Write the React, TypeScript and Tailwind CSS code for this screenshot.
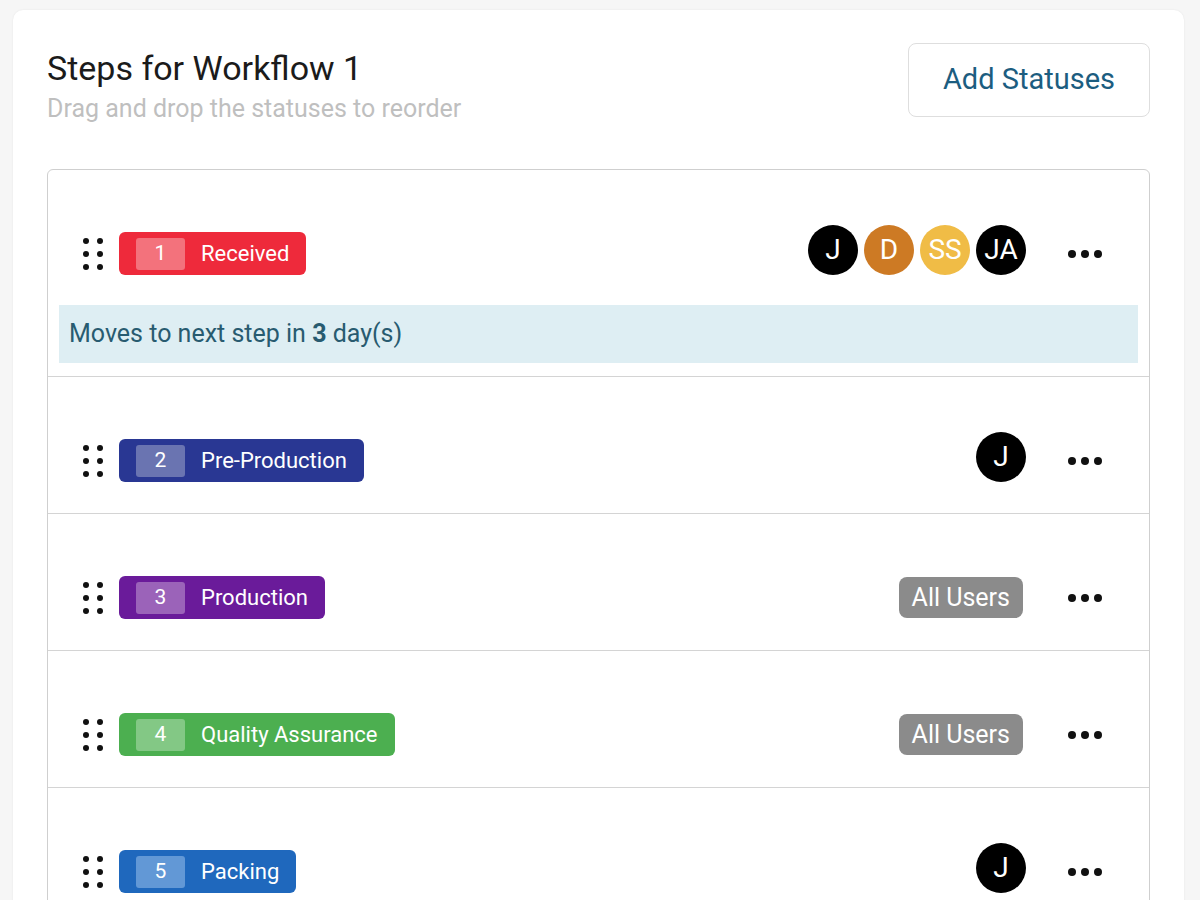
import { Fragment } from "react";

type Step = {
  n: number;
  name: string;
  color: string;
  inner: string;
  users: "all" | { label: string; bg: string }[];
  days?: number;
};

const steps: Step[] = [
  {
    n: 1,
    name: "Received",
    color: "bg-[#ee2a3b]",
    inner: "bg-[#f3727c]",
    users: [
      { label: "J", bg: "bg-black" },
      { label: "D", bg: "bg-[#cd7a24]" },
      { label: "SS", bg: "bg-[#f0bc46]" },
      { label: "JA", bg: "bg-black" },
    ],
    days: 3,
  },
  {
    n: 2,
    name: "Pre-Production",
    color: "bg-[#293793]",
    inner: "bg-[#6a74b1]",
    users: [{ label: "J", bg: "bg-black" }],
  },
  {
    n: 3,
    name: "Production",
    color: "bg-[#6a1b9a]",
    inner: "bg-[#9b63b9]",
    users: "all",
  },
  {
    n: 4,
    name: "Quality Assurance",
    color: "bg-[#4caf50]",
    inner: "bg-[#83c885]",
    users: "all",
  },
  {
    n: 5,
    name: "Packing",
    color: "bg-[#1f68bd]",
    inner: "bg-[#6298d6]",
    users: [{ label: "J", bg: "bg-black" }],
  },
];

function DragHandle() {
  return (
    <div className="grid grid-cols-2 gap-x-[8px] gap-y-[7px]">
      {[0, 1, 2, 3, 4, 5].map((i) => (
        <span key={i} className="block h-[6px] w-[6px] rounded-full bg-[#111]" />
      ))}
    </div>
  );
}

function MoreDots() {
  return (
    <div className="flex items-center gap-[5px]">
      {[0, 1, 2].map((i) => (
        <span key={i} className="block h-[8px] w-[8px] rounded-full bg-[#111]" />
      ))}
    </div>
  );
}

function StepRow({ step, last }: { step: Step; last: boolean }) {
  return (
    <div className={last ? "" : "border-b border-[#d4d4d4]"}>
      <div
        className={`flex h-[43px] items-center pl-[35px] pr-[47px] mt-[62px] ${
          step.days ? "mb-[30px]" : "mb-[31px]"
        }`}
      >
        <DragHandle />
        <div
          className={`ml-[16px] flex h-[43px] items-center rounded-[6px] pl-[17px] pr-[17px] ${step.color}`}
        >
          <span
            className={`flex h-[32px] w-[49px] items-center justify-center rounded-[3px] text-[21px] text-white ${step.inner}`}
          >
            {step.n}
          </span>
          <span className="ml-[16px] text-[22px] text-white">{step.name}</span>
        </div>
        <div className="ml-auto flex items-center">
          {step.users === "all" ? (
            <span className="flex h-[41px] items-center rounded-[8px] bg-[#8b8b8b] px-[13px] text-[25px] text-white">
              All Users
            </span>
          ) : (
            <div className="flex -translate-y-[4px] translate-x-[3px] gap-[6px]">
              {step.users.map((u, i) => (
                <span
                  key={i}
                  className={`flex h-[50px] w-[50px] items-center justify-center rounded-full text-[28px] text-white ${u.bg}`}
                >
                  {u.label}
                </span>
              ))}
            </div>
          )}
          <div className="ml-[45px]">
            <MoreDots />
          </div>
        </div>
      </div>
      {step.days && (
        <div className="mx-[11px] mb-[13px] flex h-[58px] items-center bg-[#deeef3] pl-[10px] text-[25px] text-[#285b70]">
          Moves to next step in&nbsp;<b className="font-bold">{step.days}</b>&nbsp;day(s)
        </div>
      )}
    </div>
  );
}

export default function App() {
  return (
    <div
      className="h-[900px] overflow-hidden bg-[#f6f6f6] pl-[13px] pr-[16px] pt-[10px]"
      style={{ fontFamily: "Roboto, 'Liberation Sans', sans-serif" }}
    >
      <div className="min-h-[900px] rounded-[10px] bg-white px-[34px] pt-[33px] shadow-[0_0_2px_rgba(0,0,0,0.08)]">
        <div className="flex items-start justify-between">
          <div>
            <h1 className="mt-[5px] text-[34px] leading-[40px] text-[#1b1b1b]">
              Steps for Workflow 1
            </h1>
            <p className="mt-[6px] text-[25px] leading-[30px] text-[#bfbfbf]">
              Drag and drop the statuses to reorder
            </p>
          </div>
          <button className="flex h-[74px] w-[242px] items-center justify-center rounded-[8px] border border-[#dedede] bg-white text-[29px] text-[#1c5d80]">
            Add Statuses
          </button>
        </div>
        <div className="mt-[45px] rounded-t-[6px] border border-[#cfcfcf]">
          {steps.map((s, i) => (
            <Fragment key={s.n}>
              <StepRow step={s} last={i === steps.length - 1} />
            </Fragment>
          ))}
        </div>
      </div>
    </div>
  );
}
